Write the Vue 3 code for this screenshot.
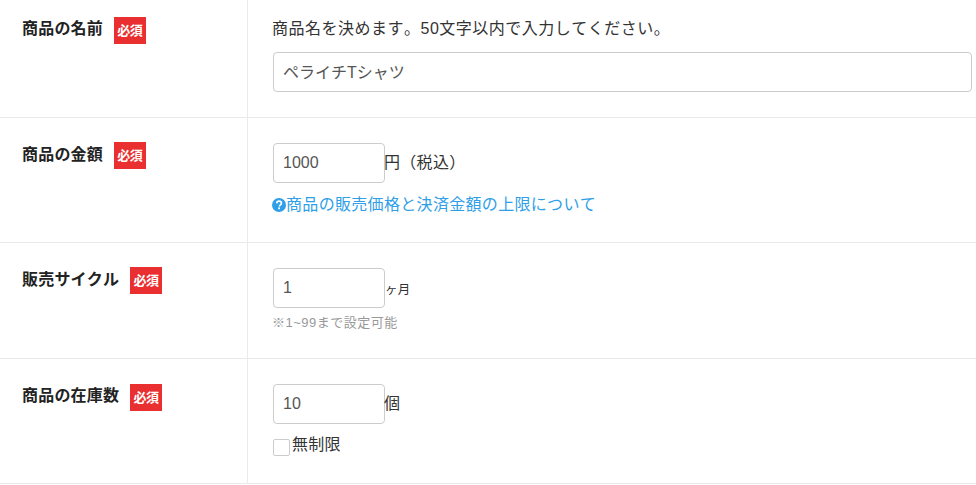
<script setup>
const limitNote = '商品の販売価格と決済金額の上限について'
</script>

<template>
  <div class="form">
    <div class="row row-name">
      <div class="head">
        <span class="label">商品の名前</span>
        <span class="required">必須</span>
      </div>
      <div class="body">
        <p class="lead">商品名を決めます。50文字以内で入力してください。</p>
        <input class="field wide" type="text" value="ペライチTシャツ" />
      </div>
    </div>

    <div class="row row-price">
      <div class="head">
        <span class="label">商品の金額</span>
        <span class="required">必須</span>
      </div>
      <div class="body">
        <div class="inline">
          <input class="field short" type="text" value="1000" />
          <span class="unit">円（税込）</span>
        </div>
        <a class="help" href="#">
          <svg class="help-icon" viewBox="0 0 14 14">
            <circle cx="7" cy="7" r="7" fill="#2f9fe8" />
            <path d="M4.7 5.4C4.8 4 5.8 3.2 7.1 3.2c1.300 0 2.300 .8 2.300 2 0 1-.6 1.500-1.200 1.900-.6 .4-.8 .7-.8 1.400" fill="none" stroke="#fff" stroke-width="1.700" />
            <rect x="6.200" y="9.400" width="1.800" height="1.800" fill="#fff" />
          </svg>{{ limitNote }}
        </a>
      </div>
    </div>

    <div class="row row-cycle">
      <div class="head">
        <span class="label">販売サイクル</span>
        <span class="required">必須</span>
      </div>
      <div class="body">
        <div class="inline">
          <input class="field short" type="text" value="1" />
          <span class="unit small">ヶ月</span>
        </div>
        <p class="note">※1~99まで設定可能</p>
      </div>
    </div>

    <div class="row row-stock">
      <div class="head">
        <span class="label">商品の在庫数</span>
        <span class="required">必須</span>
      </div>
      <div class="body">
        <div class="inline">
          <input class="field short" type="text" value="10" />
          <span class="unit">個</span>
        </div>
        <label class="check">
          <span class="box"></span>無制限
        </label>
      </div>
    </div>
  </div>
</template>

<style>
body {
  background: #fff;
}
</style>

<style scoped>
.form {
  width: 976px;
  font-family: "Liberation Sans", "Noto Sans CJK JP", sans-serif;
  font-size: 16px;
  font-kerning: none;
  color: #333;
}

.row {
  display: flex;
  box-sizing: border-box;
  border-bottom: 1px solid #eaeaea;
}
.row-name { height: 118px; }
.row-price { height: 125px; }
.row-cycle { height: 116px; }
.row-stock { height: 125px; }

.head {
  box-sizing: border-box;
  width: 248px;
  flex-shrink: 0;
  border-right: 1px solid #eaeaea;
  padding: 17px 0 0 22px;
  display: flex;
  align-items: flex-start;
  gap: 10.5px;
}
.row-cycle .head { padding-top: 24px; }
.row-stock .head { padding-top: 25px; }
.row-price .head { padding-top: 24px; }
.row-price .label,
.row-cycle .label { margin-top: 1px; }

.label {
  font-weight: 700;
  letter-spacing: 0.2px;
  line-height: 24px;
  color: #222;
}

.required {
  width: 32.5px;
  height: 27px;
  background: #e92f2f;
  color: #fff;
  font-family: "Liberation Serif", "Noto Sans CJK JP", serif;
  font-size: 13px;
  font-weight: 700;
  letter-spacing: -0.5px;
  line-height: 27px;
  text-align: center;
  white-space: nowrap;
}

.body {
  flex: 1;
  padding: 0 4px 0 25px;
}
.row-name .body { padding-top: 17px; }
.row-price .body { padding-top: 25px; }
.row-cycle .body { padding-top: 25px; }
.row-stock .body { padding-top: 25px; }

.lead {
  margin: 0 0 11px -1px;
  letter-spacing: 0.5px;
  line-height: 24px;
}

.field {
  box-sizing: border-box;
  display: block;
  height: 40px;
  padding: 0 9px;
  border: 1px solid #ccc;
  border-radius: 4px;
  background: #fff;
  font: inherit;
  color: #555;
  outline: none;
}
.wide {
  width: 699px;
  padding-bottom: 3px;
}
.short { width: 112px; }

.inline {
  display: flex;
  align-items: center;
}
.unit {
  margin-left: -1px;
  letter-spacing: 0.3px;
  line-height: 24px;
}
.unit.small {
  margin-left: 0;
  font-size: 12.5px;
  margin-top: 3px;
}

.help {
  display: flex;
  align-items: center;
  margin: 10px 0 0 -1px;
  letter-spacing: 0.32px;
  line-height: 24px;
  color: #2f9fe8;
  text-decoration: none;
}
.help-icon {
  width: 14px;
  height: 14px;
  flex-shrink: 0;
}

.note {
  margin: 6px 0 0 -1px;
  font-size: 13px;
  letter-spacing: 0.5px;
  line-height: 18px;
  color: #999;
}

.check {
  display: flex;
  align-items: flex-start;
  margin-top: 9px;
  letter-spacing: 0.3px;
  line-height: 24px;
}
.box {
  box-sizing: border-box;
  width: 17px;
  height: 17px;
  margin: 6px 2px 0 0;
  border: 1px solid #ccc;
  border-radius: 2px;
  background: #fff;
  flex-shrink: 0;
}
</style>
